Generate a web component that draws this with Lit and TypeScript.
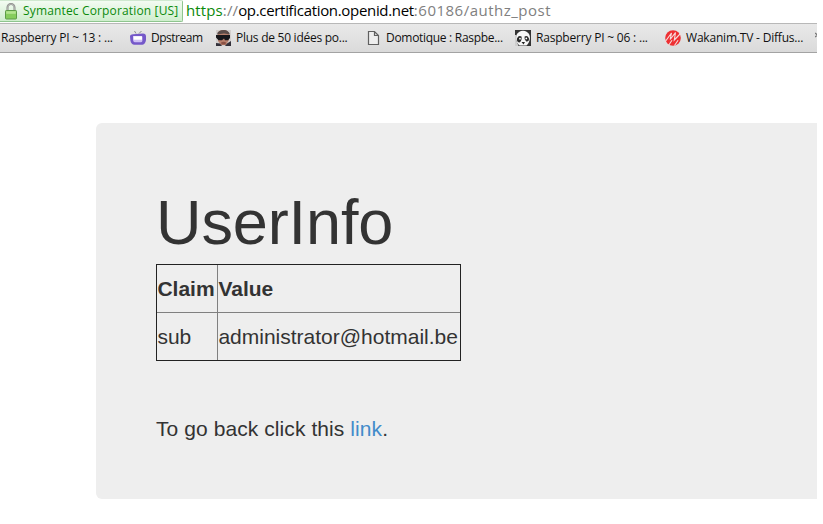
import { LitElement, html, css, svg } from "lit";
import { customElement } from "lit/decorators.js";
import { styleMap } from "lit/directives/style-map.js";

const lock = html`<svg width="12" height="17" viewBox="0 0 12 17">
  <path d="M2.5 8V4.5a3.5 3.5 0 0 1 7 0V8" fill="none" stroke="#8a8a8a" stroke-width="2" />
  <path d="M2.6 7V4.5a3.4 3.4 0 0 1 6.8 0V7" fill="none" stroke="#c4c8c2" stroke-width=".7" />
  <rect x=".5" y="7.5" width="11" height="8.5" rx=".8" fill="#86cd5c" stroke="#5d9c46" />
  <rect x="1.2" y="8.2" width="9.6" height="2.6" fill="#b4e58f" />
</svg>`;

const icons: Record<string, unknown> = {
  tv: svg`<path d="M6 3.500 4.500 1M9 3.500l2.500-2.500" stroke="#8c8c8c" fill="none"/>
    <path d="M0 6.500Q0 4.500 3 4.300L13 3.600q3 .2 3 3V10q-.6 4-3.500 4.800H4.500Q1 14.500.4 10.500z" fill="#7558c9"/>
    <path d="M3 6h8.400q1 0 1 1v3.500q0 1.700-1.300 1.700H4.700Q3.400 12.200 3.200 10.500z" fill="#cfc0f5"/>
    <path d="M3.600 6.300h8.400v3.400H3.600z" fill="#fff"/>`,
  face: svg`<path d="M1 0h15v16H1z" fill="#d3cfcd"/>
    <path d="M3 3q1-3 6-3 4 .3 5 4v6l-3 5H6l-3-4z" fill="#b9806c"/>
    <path d="M2 4.500Q2.500 0 9 0q4.500 0 6 4.500L9 3.500z" fill="#5b4c49"/>
    <path d="M1 5h14v3l-2 2.200h-3L9 8.500 7 10.200H3.500L1 7.500z" fill="#17171b"/>
    <path d="M6 12.500q3-1.300 5 0l-.5 2h-4z" fill="#8b5245"/>
    <path d="M1 13l4 .5 2 2.500H1zM16 11l-4 2.500L10 16h6z" fill="#34313a"/>`,
  page: svg`<path d="M3.500 1.500h6l4 4v9h-10zM9.500 1.500v4h4" fill="#eee" stroke="#606060" stroke-width="1.200"/>`,
  panda: svg`<path d="M0 0h16v16H0z" fill="#333"/>
    <path d="M4 2Q8-.5 12 2q3 2 3 6-.5 5-3.500 7.500h-7Q1 13 1 8q0-4 3-6z" fill="#f6f6f6"/>
    <path d="M0 5h1.500v6l2 5H0z" fill="#cfcfcf"/>
    <path d="M2 8.500Q3.500 5 6.500 6.500q.8 3.500-1.800 6Q1.500 12.500 2 8.500zM14 8.500Q12.500 5 9.600 6.500q-.8 3 1.600 5 3 .5 2.800-3z" fill="#292929"/>
    <circle cx="5" cy="8.700" r=".9" fill="#fff"/><circle cx="11.300" cy="8.400" r=".9" fill="#fff"/>
    <path d="M6.500 12h3.500L8.500 14.500z" fill="#222"/>`,
  wakanim: svg`<circle cx="8" cy="8" r="7.800" fill="#ee3033"/>
    <path d="M0 12 6.500 3 5.200 9.500 10.500 2.500 9.300 10 15.500 3.500M3.500 15.500 7 10.200M9.500 15.500l3.600-5.200" fill="none" stroke="#f6dcdc" stroke-width="1.100"/>`,
};

interface Bookmark { icon?: string; title: string; width: number; gap: number; spacing: number }

const bookmarks: Bookmark[] = [
  { title: "Raspberry PI ~ 13 : ...", width: 113, gap: 16, spacing: -0.2 },
  { icon: "tv", title: "Dpstream", width: 52, gap: 12, spacing: -0.48 },
  { icon: "face", title: "Plus de 50 idées po...", width: 112, gap: 17, spacing: -0.26 },
  { icon: "page", title: "Domotique : Raspbe...", width: 118, gap: 11, spacing: -0.3 },
  { icon: "panda", title: "Raspberry PI ~ 06 : ...", width: 112, gap: 17, spacing: -0.2 },
  { icon: "wakanim", title: "Wakanim.TV - Diffus...", width: 117, gap: 10, spacing: -0.2 },
];

@customElement("browser-bar")
class BrowserBar extends LitElement {
  static styles = css`
    :host { display: block; font-family: "Open Sans", "Noto Sans", sans-serif; white-space: nowrap; }
    .address { height: 23px; display: flex; background: #fff; }
    .identity {
      box-sizing: border-box; width: 183px; height: 22px; padding-left: 5px; display: flex; align-items: center;
      border: 1px solid #8fc58f; border-left: 0; border-top-color: #cfe8cf; border-radius: 0 2px 2px 0;
      background: linear-gradient(#f3fbf2, #cfeecd); color: #0b8a0b; font-size: 12px;
    }
    .identity svg { flex: none; margin-right: 6px; }
    .owner { letter-spacing: 0.15px; line-height: 20px; }
    .url { margin-left: 3px; font-size: 15px; line-height: 21px; color: #808080; letter-spacing: 0.12px; }
    .scheme { color: #0b8a0b; }
    .domain { color: #000; letter-spacing: -0.32px; }
    .path { letter-spacing: 0.5px; }
    .bookmarks {
      box-sizing: border-box; height: 30px; display: flex; align-items: center; overflow: hidden;
      border-top: 1px solid #b8b8b8; border-bottom: 1px solid #a3a3a3;
      background: linear-gradient(#e9e9e9, #dadada); font-size: 12px; color: #111;
    }
    .bookmark { display: flex; align-items: center; flex: none; }
    .bookmark svg { margin-right: 5px; }
    .title { line-height: 20px; }
    .first { padding-left: 1px; }
    .more { flex: none; margin-left: 2px; align-self: flex-start; margin-top: 8px; }
  `;
  render() {
    return html`
      <div class="address">
        <div class="identity">${lock}<span class="owner">Symantec Corporation [US]</span></div>
        <div class="url"><span class="scheme">https</span>://<span class="domain">op.certification.openid.net</span><span class="path">:60186/authz_post</span></div>
      </div>
      <div class="bookmarks">
        ${bookmarks.map((b) => html`
          <div class="bookmark ${b.icon ? "" : "first"}" style=${styleMap({ marginRight: `${b.gap}px` })}>
            ${b.icon ? html`<svg width="16" height="16" viewBox="0 0 16 16">${icons[b.icon]}</svg>` : ""}
            <span class="title" style=${styleMap({ width: `${b.width}px`, letterSpacing: `${b.spacing}px` })}>${b.title}</span>
          </div>`)}
        <svg class="more" width="8" height="10" viewBox="0 0 8 10"><path d="M0 1l2.500 2L0 5M4 1l2.500 2L4 5" fill="none" stroke="#777" stroke-width="1.300"/></svg>
      </div>`;
  }
}

@customElement("app-root")
class AppRoot extends LitElement {
  static styles = css`
    :host {
      display: block; box-sizing: border-box; width: 823px; height: 524px; padding-right: 6px; overflow: hidden;
      background: #fff; color: #333; font: 21px/30px "Liberation Sans", Arial, sans-serif;
    }
    .panel {
      box-sizing: border-box; margin: 70px 0 0 96px; height: 376px; padding: 65px 60px 0;
      background: #eee; border-radius: 6px 0 0 6px;
    }
    h1 { margin: 0 0 7px; font-size: 63px; line-height: 69px; font-weight: 400; letter-spacing: -0.1px; }
    .claims {
      box-sizing: border-box; width: 305px; height: 97px; display: grid; grid-template: 1fr 1fr / 60px 1fr;
      gap: 1px; border: 1px solid #222; background: #808080;
    }
    .cell { background: #eee; padding-left: 0.4px; line-height: 47px; }
    .head { font-weight: 700; }
    p { margin: 53px 0 0; letter-spacing: 0.08px; }
    a { color: #428bca; text-decoration: none; }
  `;
  render() {
    return html`
      <browser-bar></browser-bar>
      <main class="panel">
        <h1>UserInfo</h1>
        <div class="claims">
          <div class="cell head">Claim</div><div class="cell head">Value</div>
          <div class="cell">sub</div><div class="cell">administrator@hotmail.be</div>
        </div>
        <p>To go back click this <a href="#">link</a>.</p>
      </main>`;
  }
}
